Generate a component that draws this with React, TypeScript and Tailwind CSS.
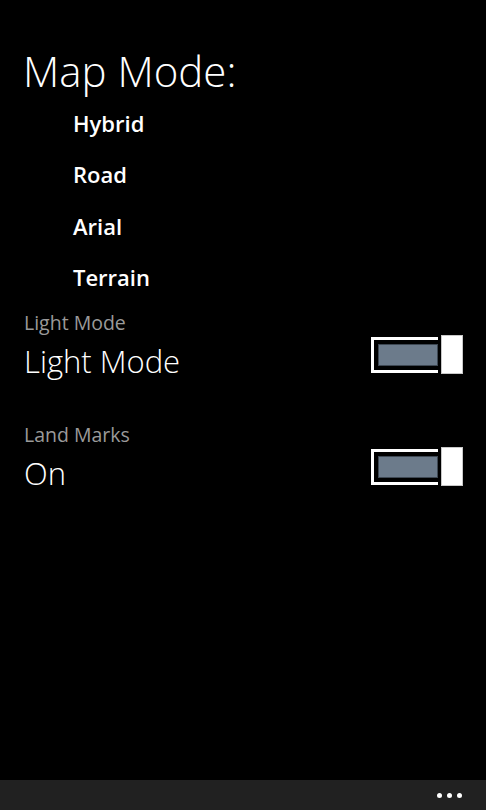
import React from "react";

const font = { fontFamily: '"Open Sans", "Noto Sans", sans-serif' };

function Toggle() {
  return (
    <div className="flex items-center">
      <div className="w-[67px] h-[36px] border-white border-l-[3px] border-y-[3px] pl-[4px] py-[4px] flex">
        <div className="flex-1 bg-[#6c7b8b] border border-[#3e4853]" />
      </div>
      <div className="ml-[3px] w-[22px] h-[39px] bg-white border border-[#c8c8c8]" />
    </div>
  );
}

function Setting({ label, value }: { label: string; value: string }) {
  return (
    <div className="flex flex-col">
      <div className="pl-[24px] h-[24px] text-[19.5px] leading-[24px] text-[#9a9a9a]">{label}</div>
      <div className="mt-[8px] flex items-start justify-between pl-[24px] pr-[23px]">
        <div className="h-[36px] text-[31px] leading-[36px] font-light text-white">{value}</div>
        <div className="-mt-[8px]">
          <Toggle />
        </div>
      </div>
    </div>
  );
}

export default function App() {
  return (
    <div className="w-[486px] h-[810px] bg-black flex flex-col" style={font}>
      <div className="pt-[47px] pl-[23px] h-[95px] text-[42px] leading-[48px] font-light text-white">
        Map Mode:
      </div>
      <div className="mt-[3px] flex flex-col pl-[73px]">
        {["Hybrid", "Road", "Arial", "Terrain"].map((t) => (
          <div key={t} className="h-[51.3px] text-[22px] leading-[51px] font-semibold text-white">
            {t}
          </div>
        ))}
      </div>
      <div className="mt-[8px] flex flex-col gap-[44px]">
        <Setting label="Light Mode" value="Light Mode" />
        <Setting label="Land Marks" value="On" />
      </div>
      <div className="mt-auto h-[30px] bg-[#212121] flex items-center justify-end pr-[24px] gap-[5px]">
        <div className="w-[5px] h-[5px] rounded-full bg-white" />
        <div className="w-[5px] h-[5px] rounded-full bg-white" />
        <div className="w-[5px] h-[5px] rounded-full bg-white" />
      </div>
    </div>
  );
}
